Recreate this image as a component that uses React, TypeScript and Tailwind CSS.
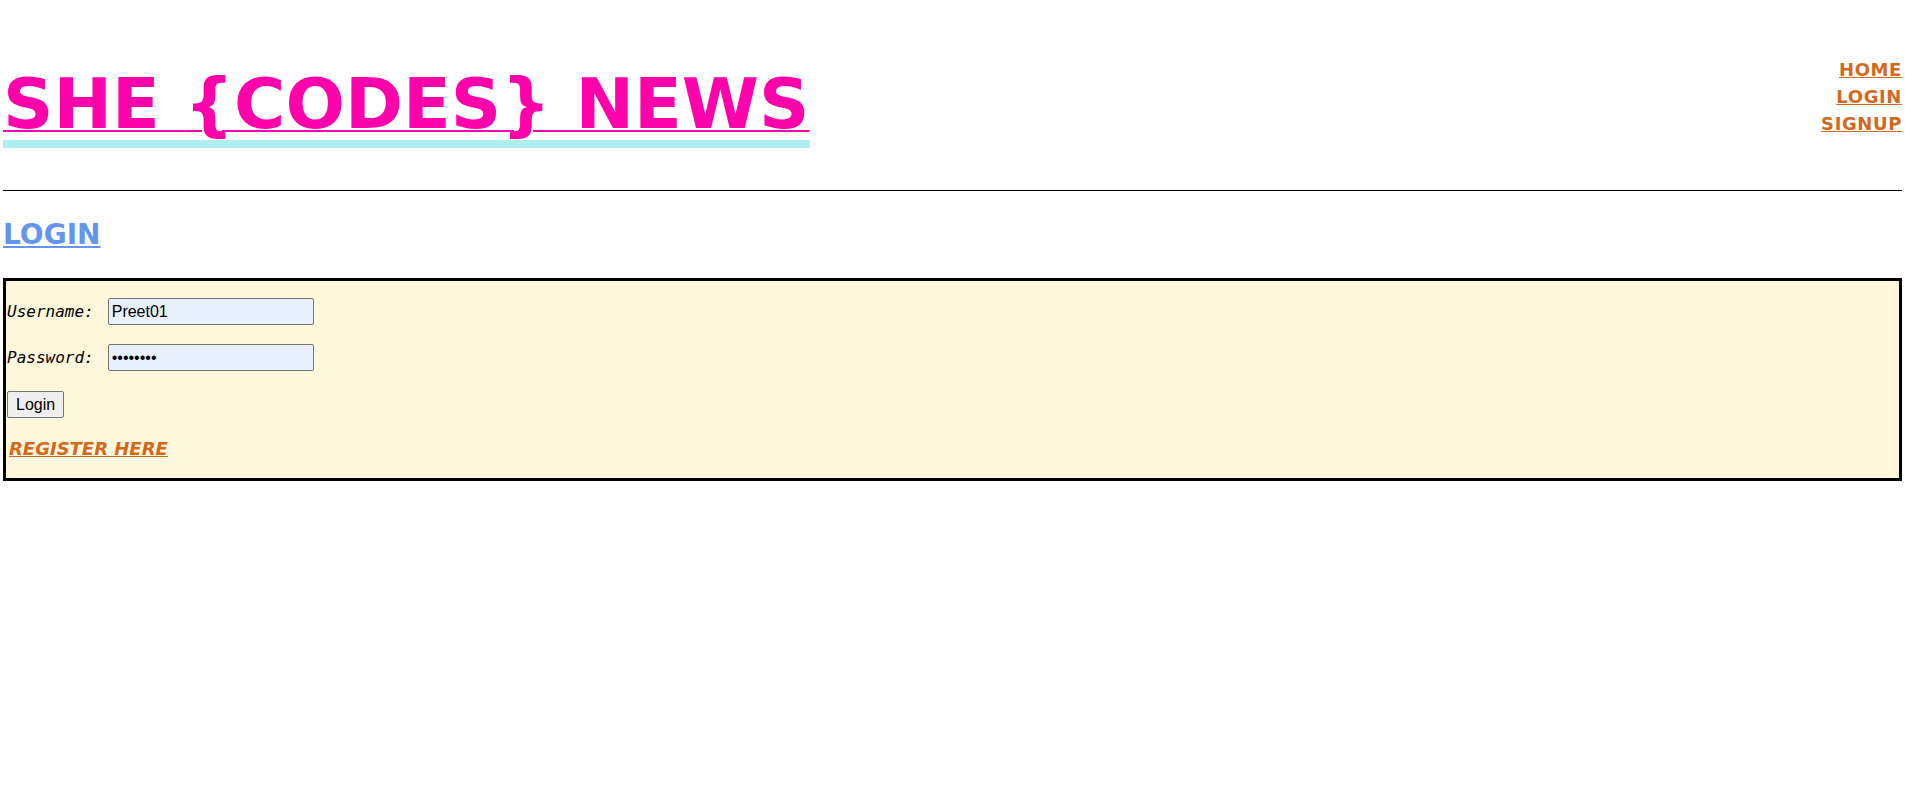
import React from 'react';

const display = { fontFamily: '"DejaVu Sans", "Liberation Sans", sans-serif' };
const mono = { fontFamily: '"DejaVu Sans Mono", "Liberation Mono", monospace' };
const arial = { fontFamily: '"Liberation Sans", Arial, sans-serif' };

const navLinks = ['HOME', 'LOGIN', 'SIGNUP'];

const App: React.FC = () => {
  return (
    <div className="min-h-screen bg-white px-[3px] text-black" style={display}>
      <header className="flex items-start justify-between">
        <h1 className="mt-[68px]">
          <a
            href="#"
            className="block border-b-[8px] border-[#afeeee] text-[70px] font-bold leading-[72px] text-[#ff00aa] underline decoration-[2px] underline-offset-[2px]"
          >
            SHE {'{'}CODES{'}'} NEWS
          </a>
        </h1>
        <nav className="mt-[56px] flex flex-col items-end">
          {navLinks.map((label) => (
            <a
              key={label}
              href="#"
              className="text-[18px] font-bold leading-[27px] tracking-[0.6px] text-[#d2691e] underline"
            >
              {label}
            </a>
          ))}
        </nav>
      </header>

      <hr className="mt-[42px] border-t border-black" />

      <h2 className="mt-[28px]">
        <a href="#" className="text-[28px] font-bold leading-[32px] text-[#6495ed] underline">
          LOGIN
        </a>
      </h2>

      <form className="mt-[27px] border-[3px] border-black bg-[#fff8dc] px-[1px] pt-[17px] pb-[18px]">
        <div className="flex items-center gap-[14px]">
          <label className="text-[16px] italic" style={mono}>
            Username:
          </label>
          <input
            type="text"
            defaultValue="Preet01"
            className="h-[27px] w-[206px] rounded-[2px] border border-[#767676] bg-[#e8f0fe] px-[3px] text-[16px] text-black"
            style={arial}
          />
        </div>
        <div className="mt-[19px] flex items-center gap-[14px]">
          <label className="text-[16px] italic" style={mono}>
            Password:
          </label>
          <input
            type="password"
            defaultValue="password"
            className="h-[27px] w-[206px] rounded-[2px] border border-[#767676] bg-[#e8f0fe] px-[3px] text-[16px] text-black"
            style={arial}
          />
        </div>
        <button
          type="button"
          className="mt-[20px] block h-[27px] rounded-[2px] border border-[#767676] bg-[#efefef] px-[8px] text-[16px] text-black"
          style={arial}
        >
          Login
        </button>
        <a
          href="#"
          className="mt-[20px] ml-[2px] block w-fit text-[18px] font-bold italic leading-[22px] text-[#d2691e] underline"
        >
          REGISTER HERE
        </a>
      </form>
    </div>
  );
};

export default App;
